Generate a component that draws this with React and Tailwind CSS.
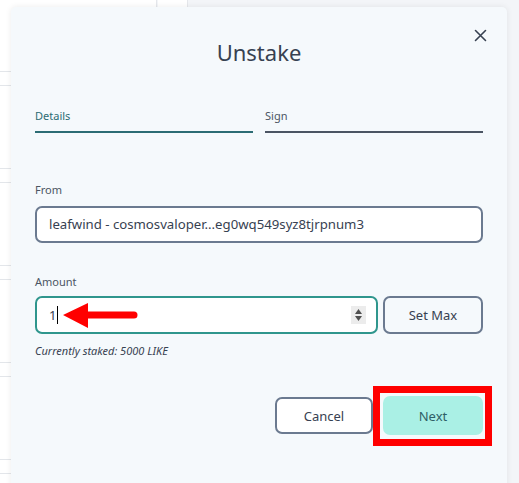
import React from "react";

function BgRows() {
  const rows = [71, 168, 265, 362, 459];
  return (
    <div className="absolute inset-0 bg-[#f3f5f8]">
      <div className="absolute left-0 top-0 w-[157px] h-full bg-white border-r border-[#e5e7eb]"></div>
      <div className="absolute left-[158px] top-0 w-[30px] h-[8px] bg-white border-r border-[#e5e7eb]"></div>
      {rows.map((y) => (
        <div key={y} className="absolute left-0 w-[157px] h-[15px] border-y border-[#e3e6ea]" style={{ top: y }}></div>
      ))}
    </div>
  );
}

export default function App() {
  return (
    <div
      className="relative w-[519px] h-[483px] overflow-hidden"
      style={{ fontFamily: '"Noto Sans", "Open Sans", sans-serif' }}
    >
      <BgRows />
      <div className="absolute left-[11px] top-[7px] w-[496px] h-[500px] bg-[#f5f9fc] rounded-[5px] shadow-[0_0_6px_rgba(0,0,0,0.08)] px-[24px] pt-[31px] flex flex-col">
        <button className="absolute right-[20px] top-[21px] w-[14px] h-[14px] flex items-center justify-center">
          <svg width="13" height="13" viewBox="0 0 13 13">
            <path d="M1.5 1.5 L11.5 11.5 M11.5 1.5 L1.5 11.5" stroke="#374151" strokeWidth="1.6" strokeLinecap="round" />
          </svg>
        </button>
        <h2 className="text-center text-[22px] leading-[28px] text-[#374151]">Unstake</h2>

        <div className="mt-[42px] grid grid-cols-2 gap-[12px]">
          <div className="border-b-2 border-[#2c6c74] pb-[7px] text-[11px] leading-[16px] text-[#2c6c74]">Details</div>
          <div className="border-b-2 border-[#4b5563] pb-[7px] text-[11px] leading-[16px] text-[#4b5563]">Sign</div>
        </div>

        <div className="mt-[49px] text-[11px] leading-[16px] text-[#4b5563]">From</div>
        <div className="mt-[8px] h-[37px] rounded-[7px] border-2 border-[#6b7a90] bg-white flex items-center px-[12px] pt-[1px] text-[13.2px] text-[#374151]">
          leafwind - cosmosvaloper...eg0wq549syz8tjrpnum3
        </div>

        <div className="mt-[31px] text-[11px] leading-[16px] text-[#4b5563]">Amount</div>
        <div className="mt-[6px] flex gap-[5px]">
          <div className="relative flex-1 h-[38px] rounded-[7px] border-2 border-[#2f968d] bg-white flex items-center pl-[12px] pr-[10px] text-[13px] text-[#374151]">
            <span className="pt-[1px]">1</span>
            <span className="ml-[1px] w-[1px] h-[18px] bg-black"></span>
            <div className="ml-auto w-[15px] h-[18px] bg-[#ececec] flex flex-col items-center justify-center gap-[2px]">
              <svg width="7" height="5" viewBox="0 0 7 5"><path d="M3.5 0 L7 5 L0 5 Z" fill="#505050" /></svg>
              <svg width="7" height="5" viewBox="0 0 7 5"><path d="M0 0 L7 0 L3.5 5 Z" fill="#505050" /></svg>
            </div>
          </div>
          <button className="w-[100px] h-[38px] rounded-[7px] border-2 border-[#6b7a90] pt-[2px] text-[13px] text-[#374151]">Set Max</button>
        </div>
        <div className="mt-[10px] text-[11px] leading-[14px] italic text-[#374151]">Currently staked: 5000 LIKE</div>

        <div className="mt-[39px] flex justify-end gap-[10px]">
          <button className="w-[98px] h-[37px] rounded-[7px] border-2 border-[#6b7a90] bg-white pt-[2px] text-[13px] text-[#374151]">Cancel</button>
          <button className="w-[100px] h-[39px] -mt-[1px] rounded-[7px] bg-[#aaf0e5] pt-[2px] text-[13px] text-[#2f5f66]">Next</button>
        </div>
      </div>

      <div className="absolute left-[373px] top-[386px] w-[119px] h-[60px] border-[7px] border-[#ff0000]"></div>
      <svg className="absolute left-[60px] top-[302px]" width="80" height="28" viewBox="0 0 80 28">
        <path d="M3 13 L28 1 L28 9.5 L74 9.5 Q77.5 9.5 77.5 13 Q77.5 16.5 74 16.5 L28 16.5 L28 26 Z" fill="#ff0000" />
      </svg>
    </div>
  );
}
